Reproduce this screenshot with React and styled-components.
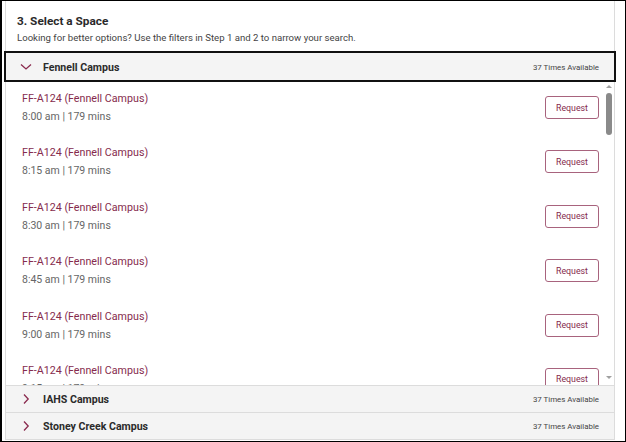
import React from "react";
import styled, { createGlobalStyle } from "styled-components";

const GlobalStyle = createGlobalStyle`
  html, body {
    margin: 0;
    padding: 0;
    background: #fff;
  }
  body {
    font-family: Roboto, "Liberation Sans", Arial, sans-serif;
  }
`;

const times = ["8:00 am", "8:15 am", "8:30 am", "8:45 am", "9:00 am", "9:15 am"];

const ChevronDown = () => (
  <svg width="12" height="8" viewBox="0 0 12 8">
    <path d="M1 1.5 L6 6 L11 1.5" fill="none" stroke="#8a2a4e" strokeWidth="1.3" />
  </svg>
);

const ChevronRight = () => (
  <svg width="8" height="12" viewBox="0 0 8 12">
    <path d="M2 1.5 L6.2 6 L2 10.5" fill="none" stroke="#8a2a4e" strokeWidth="1.3" />
  </svg>
);

const App = () => {
  return (
    <>
      <GlobalStyle />
      <Frame>
        <Panel>
          <Intro>
            <Title>3. Select a Space</Title>
            <Sub>Looking for better options? Use the filters in Step 1 and 2 to narrow your search.</Sub>
          </Intro>

          <Header $focused>
            <IconBox $open>
              <ChevronDown />
            </IconBox>
            <Campus>Fennell Campus</Campus>
            <Count>37 Times Available</Count>
          </Header>

          <ListWrap>
            <List>
              {times.map((t) => (
                <Item key={t}>
                  <Info>
                    <Room>FF-A124 (Fennell Campus)</Room>
                    <Time>{t} | 179 mins</Time>
                  </Info>
                  <Button>Request</Button>
                </Item>
              ))}
            </List>
            <Scrollbar>
              <Arrow $up />
              <Track>
                <Thumb />
              </Track>
              <Arrow />
            </Scrollbar>
          </ListWrap>

          <Header>
            <IconBox>
              <ChevronRight />
            </IconBox>
            <Campus>IAHS Campus</Campus>
            <Count>37 Times Available</Count>
          </Header>
          <Header>
            <IconBox>
              <ChevronRight />
            </IconBox>
            <Campus>Stoney Creek Campus</Campus>
            <Count>37 Times Available</Count>
          </Header>
        </Panel>
      </Frame>
    </>
  );
};

export default App;

const Frame = styled.div`
  width: 626px;
  height: 442px;
  box-sizing: border-box;
  border: 1px solid #000;
  border-left-width: 2px;
  overflow: hidden;
  background: #fff;
`;

const Panel = styled.div`
  margin: 0 10px 0 3px;
  height: 439px;
  box-sizing: border-box;
  border: 1px solid #dcdcdc;
  border-top: none;
  display: flex;
  flex-direction: column;
`;

const Intro = styled.div`
  padding: 12px 0 0 11px;
  height: 51px;
  box-sizing: border-box;
`;

const Title = styled.div`
  font-size: 11.8px;
  font-weight: 700;
  color: #2a2a2a;
  line-height: 16px;
`;

const Sub = styled.div`
  font-size: 9.6px;
  color: #444;
  line-height: 14px;
  margin-top: 2px;
`;

const Header = styled.div`
  display: flex;
  align-items: center;
  height: 26px;
  flex-shrink: 0;
  background: #f4f4f4;
  border-top: 1px solid ${(p) => (p.$focused ? "transparent" : "#dcdcdc")};
  outline: ${(p) => (p.$focused ? "2px solid #111" : "none")};
  margin-top: ${(p) => (p.$focused ? "1px" : "0")};
  position: relative;
  z-index: 1;
  padding: 0 15px 0 14px;
`;

const IconBox = styled.div`
  width: 17px;
  display: flex;
  align-items: center;
  padding-left: ${(p) => (p.$open ? "0" : "2px")};
  margin-right: ${(p) => (p.$open ? "6px" : "4px")};
`;

const Campus = styled.div`
  font-size: 10.6px;
  font-weight: 700;
  color: #2b2b2b;
  flex: 1;
`;

const Count = styled.div`
  font-size: 7.9px;
  color: #444;
`;

const ListWrap = styled.div`
  flex: 1;
  display: flex;
  overflow: hidden;
  min-height: 0;
`;

const List = styled.div`
  flex: 1;
  overflow: hidden;
  padding: 0 4px 0 16px;
`;

const Item = styled.div`
  height: 54.4px;
  display: flex;
  align-items: flex-start;
  justify-content: space-between;
  padding-top: 10px;
  box-sizing: border-box;
  flex-shrink: 0;
`;

const Info = styled.div`
  display: flex;
  flex-direction: column;
`;

const Room = styled.div`
  font-size: 10.7px;
  line-height: 18px;
  color: #862b4d;
`;

const Time = styled.div`
  font-size: 10.5px;
  line-height: 18px;
  color: #666;
`;

const Button = styled.button`
  width: 54px;
  height: 23px;
  margin-top: 6px;
  padding: 0;
  border: 1px solid #a8637d;
  border-radius: 3px;
  background: #fff;
  color: #862b4d;
  font-family: Roboto, "Liberation Sans", Arial, sans-serif;
  font-size: 8.8px;
  cursor: pointer;
`;

const Scrollbar = styled.div`
  width: 11px;
  display: flex;
  flex-direction: column;
  align-items: center;
  padding: 3px 0 4px;
  box-sizing: border-box;
`;

const Arrow = styled.div`
  width: 0;
  height: 0;
  border-left: 3px solid transparent;
  border-right: 3px solid transparent;
  ${(p) =>
    p.$up ? "border-bottom: 3px solid #a0a0a0;" : "border-top: 3px solid #a0a0a0;"}
  margin: 2px 0;
`;

const Track = styled.div`
  flex: 1;
  width: 100%;
  display: flex;
  justify-content: center;
  padding-top: 3px;
`;

const Thumb = styled.div`
  width: 6px;
  height: 42px;
  border-radius: 3px;
  background: #8a8a8a;
`;
